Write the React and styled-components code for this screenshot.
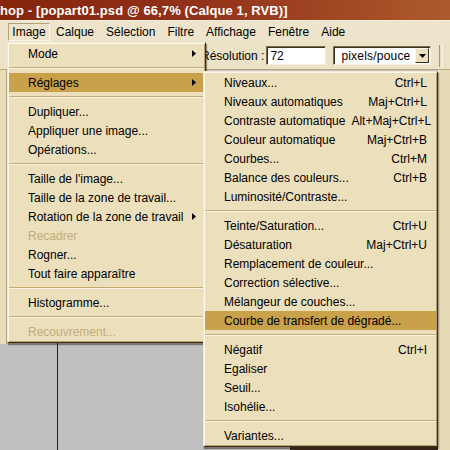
import React from "react";
import styled, { createGlobalStyle } from "styled-components";

// ---------- data ----------
const imageMenu = [
  { label: "Mode", sub: true },
  "sep",
  { label: "Réglages", sub: true, active: true },
  "sep",
  { label: "Dupliquer..." },
  { label: "Appliquer une image..." },
  { label: "Opérations..." },
  "sep",
  { label: "Taille de l'image..." },
  { label: "Taille de la zone de travail..." },
  { label: "Rotation de la zone de travail", sub: true },
  { label: "Recadrer", disabled: true },
  { label: "Rogner..." },
  { label: "Tout faire apparaître" },
  "sep",
  { label: "Histogramme..." },
  "sep",
  { label: "Recouvrement...", disabled: true },
];

const reglagesMenu = [
  { label: "Niveaux...", key: "Ctrl+L" },
  { label: "Niveaux automatiques", key: "Maj+Ctrl+L" },
  { label: "Contraste automatique", key: "Alt+Maj+Ctrl+L" },
  { label: "Couleur automatique", key: "Maj+Ctrl+B" },
  { label: "Courbes...", key: "Ctrl+M" },
  { label: "Balance des couleurs...", key: "Ctrl+B" },
  { label: "Luminosité/Contraste..." },
  "sep",
  { label: "Teinte/Saturation...", key: "Ctrl+U" },
  { label: "Désaturation", key: "Maj+Ctrl+U" },
  { label: "Remplacement de couleur..." },
  { label: "Correction sélective..." },
  { label: "Mélangeur de couches..." },
  { label: "Courbe de transfert de dégradé...", active: true },
  "sep",
  { label: "Négatif", key: "Ctrl+I" },
  { label: "Egaliser" },
  { label: "Seuil..." },
  { label: "Isohélie..." },
  "sep",
  { label: "Variantes..." },
];

const menuBar = ["Image", "Calque", "Sélection", "Filtre", "Affichage", "Fenêtre", "Aide"];

// ---------- styles ----------
const GlobalStyle = createGlobalStyle`
  html, body { margin: 0; padding: 0; }
  body {
    font-family: "Liberation Sans", Arial, sans-serif;
    font-size: 12px;
    background: #c0c0c0;
    color: #000;
  }
`;

const Screen = styled.div`
  position: relative;
  width: 450px; height: 450px;
  overflow: hidden;
  display: flex; flex-direction: column;
  background: #c0c0c0;
`;

const TitleBar = styled.div`
  flex: none; height: 20px;
  display: flex; align-items: center;
  background: linear-gradient(90deg, #85250b 0%, #93321a 45%, #ad5a2c 100%);
  color: #fff; font-weight: bold; font-size: 13px;
  white-space: nowrap; letter-spacing: 0.1px;
`;

const MenuBar = styled.div`
  flex: none; height: 22px;
  display: flex; align-items: center;
  padding: 1px 0 0 8px;
  background: #ede4cb;
  border-top: 1px solid #f8f2e2;
  box-sizing: border-box;
`;

const MenuBarItem = styled.div`
  height: 18px; padding: 0 5px;
  display: flex; align-items: center;
  box-sizing: border-box;
  border: 1px solid transparent;
  ${p => p.$pressed && `
    border-color: #b6a27a #fbf6ea #fbf6ea #b6a27a;
    padding: 0;
    width: 42px;
    justify-content: center;
  `}
`;

const OptionsBar = styled.div`
  flex: none; height: 28px;
  display: flex; align-items: center;
  padding-left: 201px;
  background: #ece2c7;
  border-bottom: 1px solid #b9a57e;
  box-sizing: border-box;
  white-space: nowrap;
`;

const OptLabel = styled.span`
  margin-right: 2px;
`;

const TextField = styled.div`
  width: 60px; height: 19px; box-sizing: border-box;
  background: #fff;
  border: 1px solid; border-color: #7b6b4b #f4eedd #f4eedd #7b6b4b;
  box-shadow: inset 1px 1px #3a3020;
  padding: 2px 0 0 3px;
  margin-right: 7px;
`;

const SelectField = styled.div`
  width: 98px; height: 19px; box-sizing: border-box;
  display: flex; align-items: center; justify-content: space-between;
  background: #fff;
  border: 1px solid; border-color: #7b6b4b #f4eedd #f4eedd #7b6b4b;
  box-shadow: inset 1px 1px #3a3020;
  padding: 0 1px 0 7px;
  letter-spacing: 0.2px;
`;

const DropButton = styled.div`
  width: 14px; height: 15px; box-sizing: border-box;
  display: flex; align-items: center; justify-content: center;
  background: #ebdfbf;
  border: 1px solid; border-color: #fbf6ea #3a3020 #3a3020 #fbf6ea;
`;

const Grip = styled.div`
  width: 2px; height: 22px; margin-left: 8px;
  border-left: 1px solid #a8956e; border-right: 1px solid #fbf6ea;
`;

const Workspace = styled.div`
  flex: 1;
  display: grid;
  grid-template-columns: 7px 50px 1fr 12px;
  min-height: 0;
`;

const ToolStrip = styled.div`
  align-self: start;
  height: 274px;
  background: #e9dcb8;
  border-right: 1px solid #b9a57e;
  box-sizing: border-box;
`;

const Gray = styled.div`
  background: #c0c0c0;
`;

const DocWindow = styled.div`
  background: #c0c0c0;
  border-left: 1px solid #1d1d48;
  display: flex; flex-direction: column; justify-content: flex-end;
`;

const DocImage = styled.div`
  height: 3px; margin-left: 232px;
  background: #3b271c;
`;

const SidePanel = styled.div`
  background: #e7dab6;
  border-left: 1px solid #fbf6ea;
`;

const Menu = styled.div`
  position: absolute;
  left: ${p => p.$x}px; top: ${p => p.$y}px;
  width: ${p => p.$w}px;
  box-sizing: border-box;
  padding: 1px;
  background: #ecdfbb;
  border: 1px solid; border-color: #f2e9d2 #3f3219 #3f3219 #f2e9d2;
  box-shadow: inset 1px 1px #fffaee, inset -1px -1px #b49d6c, 1px 2px 1px rgba(40, 30, 10, 0.45);
  z-index: ${p => p.$z};
`;

const Item = styled.div`
  height: 19px;
  display: flex; align-items: center;
  padding: 0 ${p => (p.$sub ? 8 : 9)}px 0 19px;
  white-space: nowrap;
  background: ${p => (p.$active ? "#c8a14a" : "transparent")};
  color: ${p => (p.$disabled ? "#c5ad7b" : "#000")};
`;

const Label = styled.span`
  flex: 1;
`;

const Shortcut = styled.span`
  margin-left: 6px;
`;

const Separator = styled.div`
  height: 10px;
  display: flex; flex-direction: column; justify-content: center;
  &::before {
    content: "";
    display: block; height: 1px;
    background: #c4aa72;
    border-bottom: 1px solid #fbf4e2;
  }
`;

// ---------- icons ----------
const Arrow = () => (
  <svg width="4" height="7" viewBox="0 0 4 7">
    <polygon points="0,0 4,3.5 0,7" fill="#000" />
  </svg>
);

const DownArrow = () => (
  <svg width="7" height="4" viewBox="0 0 7 4">
    <polygon points="0,0 7,0 3.5,4" fill="#000" />
  </svg>
);

function MenuList({ items, ...pos }) {
  return (
    <Menu {...pos}>
      {items.map((it, i) =>
        it === "sep" ? (
          <Separator key={i} />
        ) : (
          <Item key={i} $active={it.active} $disabled={it.disabled} $sub={it.sub}>
            <Label>{it.label}</Label>
            {it.key && <Shortcut>{it.key}</Shortcut>}
            {it.sub && <Arrow />}
          </Item>
        )
      )}
    </Menu>
  );
}

export default function App() {
  return (
    <>
      <GlobalStyle />
      <Screen>
        <TitleBar>hop - [popart01.psd @ 66,7% (Calque 1, RVB)]</TitleBar>
        <MenuBar>
          {menuBar.map((m, i) => (
            <MenuBarItem key={m} $pressed={i === 0}>{m}</MenuBarItem>
          ))}
        </MenuBar>
        <OptionsBar>
          <OptLabel>Résolution :</OptLabel>
          <TextField>72</TextField>
          <SelectField>
            <span>pixels/pouce</span>
            <DropButton><DownArrow /></DropButton>
          </SelectField>
          <Grip />
        </OptionsBar>
        <Workspace>
          <ToolStrip />
          <Gray />
          <DocWindow>
            <DocImage />
          </DocWindow>
          <SidePanel />
        </Workspace>

        <MenuList items={imageMenu} $x={7} $y={42} $w={199} $z={2} />
        <MenuList items={reglagesMenu} $x={203} $y={71} $w={235} $z={3} />
      </Screen>
    </>
  );
}
